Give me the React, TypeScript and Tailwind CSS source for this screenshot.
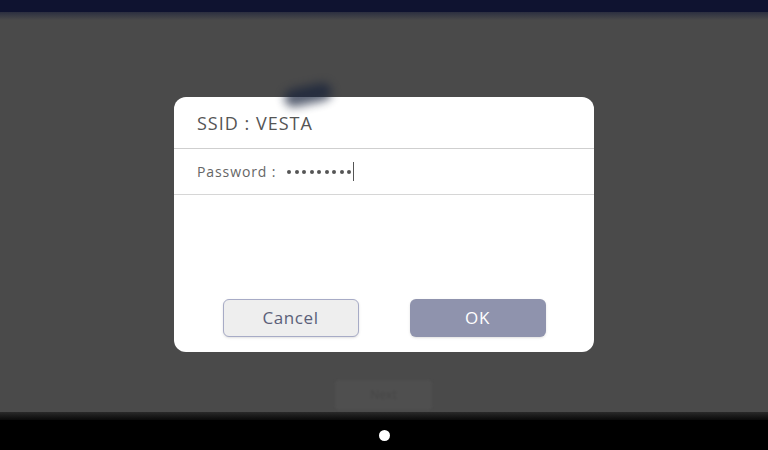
import { useState } from 'react';

export default function App() {
  const [password] = useState('vesta1234');

  return (
    <div className="flex h-[450px] w-[768px] flex-col overflow-hidden bg-black font-['Open_Sans',sans-serif]">
      <div className="h-[12px] bg-[#0f1330]" />
      <div className="h-[8px] bg-gradient-to-b from-[#2c2f40] to-[#4a4a4a]" />

      <div className="relative flex flex-1 flex-col items-center bg-[#4a4a4a]">
        {/* faded page behind the dialog */}
        <div className="absolute left-[284px] top-[66px] h-[18px] w-[48px] -rotate-12 rounded-full bg-[#16213a] opacity-70 blur-[5px]" />
        <div className="absolute left-[335px] top-[360px] flex h-[30px] w-[97px] items-center justify-center rounded bg-[#4f4f4f] text-xs text-[#464646] blur-[1px]">
          Next
        </div>

        <div className="mt-[77px] flex h-[255px] w-[420px] flex-col rounded-[12px] bg-white">
          <div className="flex h-[52px] items-center border-b border-[#cfcfcf] pl-[23px] pt-[2px] text-[18px] tracking-[1px] text-[#555]">
            SSID : VESTA
          </div>
          <div className="flex h-[46px] items-center border-b border-[#d6d6d6] pl-[23px] text-[14px] tracking-[0.9px] text-[#666]">
            <span>Password :</span>
            <span className="ml-[11px] flex items-center gap-[3.5px]">
              {password.split('').map((_, i) => (
                <span key={i} className="h-[4px] w-[4px] rounded-full bg-[#555]" />
              ))}
            </span>
            <span className="ml-[2px] h-[19px] w-px bg-[#555]" />
          </div>
          <div className="flex flex-1 items-end justify-center gap-[51px] pb-[15px]">
            <button
              type="button"
              className="h-[38px] w-[136px] rounded-[6px] border border-[#a7abc6] bg-[#eeeeee] text-[17px] tracking-[0.6px] text-[#5b6079] shadow-sm"
            >
              Cancel
            </button>
            <button
              type="button"
              className="h-[38px] w-[136px] rounded-[6px] bg-[#8f93ad] text-[17px] tracking-[0.6px] text-white shadow-sm"
            >
              OK
            </button>
          </div>
        </div>
      </div>

      <div className="h-[8px] bg-gradient-to-b from-[#2a2a2a] to-[#0a0a0a]" />
      <div className="flex h-[30px] items-center justify-center bg-black">
        <div className="h-[11px] w-[11px] rounded-full bg-white" />
      </div>
    </div>
  );
}
